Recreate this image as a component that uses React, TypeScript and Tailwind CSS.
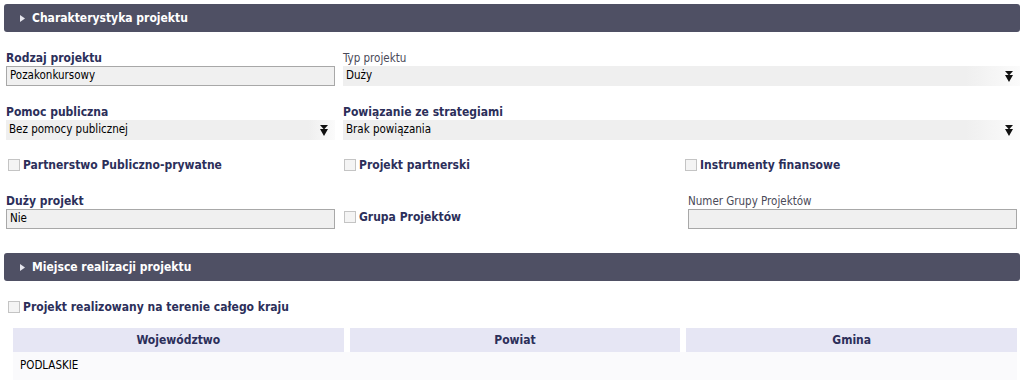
const font = "font-['DejaVu_Sans_Condensed','DejaVu_Sans',Tahoma,sans-serif]";

function SectionBar({ title }: { title: string }) {
  return (
    <div className="mx-[4px] h-[28px] rounded-[3px] bg-[#4f5064] flex items-center pl-[16px] gap-[7px]">
      <svg width="5" height="7" viewBox="0 0 5 7" className="shrink-0">
        <path d="M0 0 L5 3.5 L0 7 Z" fill="#e6e6ee" />
      </svg>
      <span className="text-white font-bold text-[12px]">{title}</span>
    </div>
  );
}

function Label({ text, bold = true }: { text: string; bold?: boolean }) {
  return (
    <div
      className={
        bold
          ? "text-[12px] font-bold text-[#2c2f5a] leading-[14px] mb-[1px]"
          : "text-[11.5px] text-[#4a4a58] leading-[14px] mb-[1px]"
      }
    >
      {text}
    </div>
  );
}

function TextBox({ value = "" }: { value?: string }) {
  return (
    <div className="h-[20px] border border-[#a8a8a8] bg-[#f0f0f0] flex items-center px-[3px] text-[11.5px] text-black">
      {value}
    </div>
  );
}

function ArrowIcon() {
  return (
    <svg width="8" height="11" viewBox="0 0 8 11">
      <path d="M0 0 H8 L4 4.5 Z M0 4 H8 L4 11 Z" fill="#111" />
    </svg>
  );
}

function SelectBox({ value }: { value: string }) {
  return (
    <div className="h-[20px] bg-[linear-gradient(to_right,#efefef_0%,#efefef_92%,#fbfbfb_100%)] flex items-center justify-between pl-[3px] pr-[7px] text-[11.5px] text-black">
      <span>{value}</span>
      <ArrowIcon />
    </div>
  );
}

function Check({ text }: { text: string }) {
  return (
    <div className="flex items-center gap-[3px]">
      <div className="w-[12px] h-[12px] border border-[#c4c4c4] bg-[#f4f4f4]" />
      <span className="text-[12px] font-bold text-[#2c2f5a]">{text}</span>
    </div>
  );
}

export default function App() {
  return (
    <div className={`${font} w-[1024px] h-[384px] bg-white pt-[4px] overflow-hidden`}>
      <SectionBar title="Charakterystyka projektu" />

      <div className="grid grid-cols-[337px_342px_1fr] pl-[6px] pr-[4px] mt-[19px]">
        <div className="pr-[2px]">
          <Label text="Rodzaj projektu" />
          <div className="w-[329px]">
            <TextBox value="Pozakonkursowy" />
          </div>
        </div>
        <div className="col-span-2">
          <Label text="Typ projektu" bold={false} />
          <SelectBox value="Duży" />
        </div>

        <div className="mt-[19px]">
          <Label text="Pomoc publiczna" />
          <div className="w-[329px]">
            <SelectBox value="Bez pomocy publicznej" />
          </div>
        </div>
        <div className="col-span-2 mt-[19px]">
          <Label text="Powiązanie ze strategiami" />
          <SelectBox value="Brak powiązania" />
        </div>

        <div className="mt-[16px] pl-[2px]">
          <Check text="Partnerstwo Publiczno-prywatne" />
        </div>
        <div className="mt-[16px] pl-[1px]">
          <Check text="Projekt partnerski" />
        </div>
        <div className="mt-[16px] pl-[0px]">
          <Check text="Instrumenty finansowe" />
        </div>

        <div className="mt-[20px]">
          <Label text="Duży projekt" />
          <div className="w-[329px]">
            <TextBox value="Nie" />
          </div>
        </div>
        <div className="mt-[20px] pl-[1px] flex items-end pb-[3px]">
          <Check text="Grupa Projektów" />
        </div>
        <div className="mt-[20px] pl-[3px]">
          <Label text="Numer Grupy Projektów" bold={false} />
          <div className="w-[329px]">
            <TextBox />
          </div>
        </div>
      </div>

      <div className="mt-[24px]">
        <SectionBar title="Miejsce realizacji projektu" />
      </div>

      <div className="pl-[8px] mt-[17px]">
        <Check text="Projekt realizowany na terenie całego kraju" />
      </div>

      <div className="mx-[13px] mr-[7px] mt-[12px]">
        <div className="grid grid-cols-3 gap-[6px]">
          {["Województwo", "Powiat", "Gmina"].map((h) => (
            <div
              key={h}
              className="h-[24px] bg-[#e6e6f4] flex items-center justify-center text-[12px] font-bold text-[#2c2f5a]"
            >
              {h}
            </div>
          ))}
        </div>
        <div className="h-[28px] bg-[#fafafc] flex items-center pl-[7px] text-[11.5px] text-black">
          PODLASKIE
        </div>
      </div>
    </div>
  );
}
